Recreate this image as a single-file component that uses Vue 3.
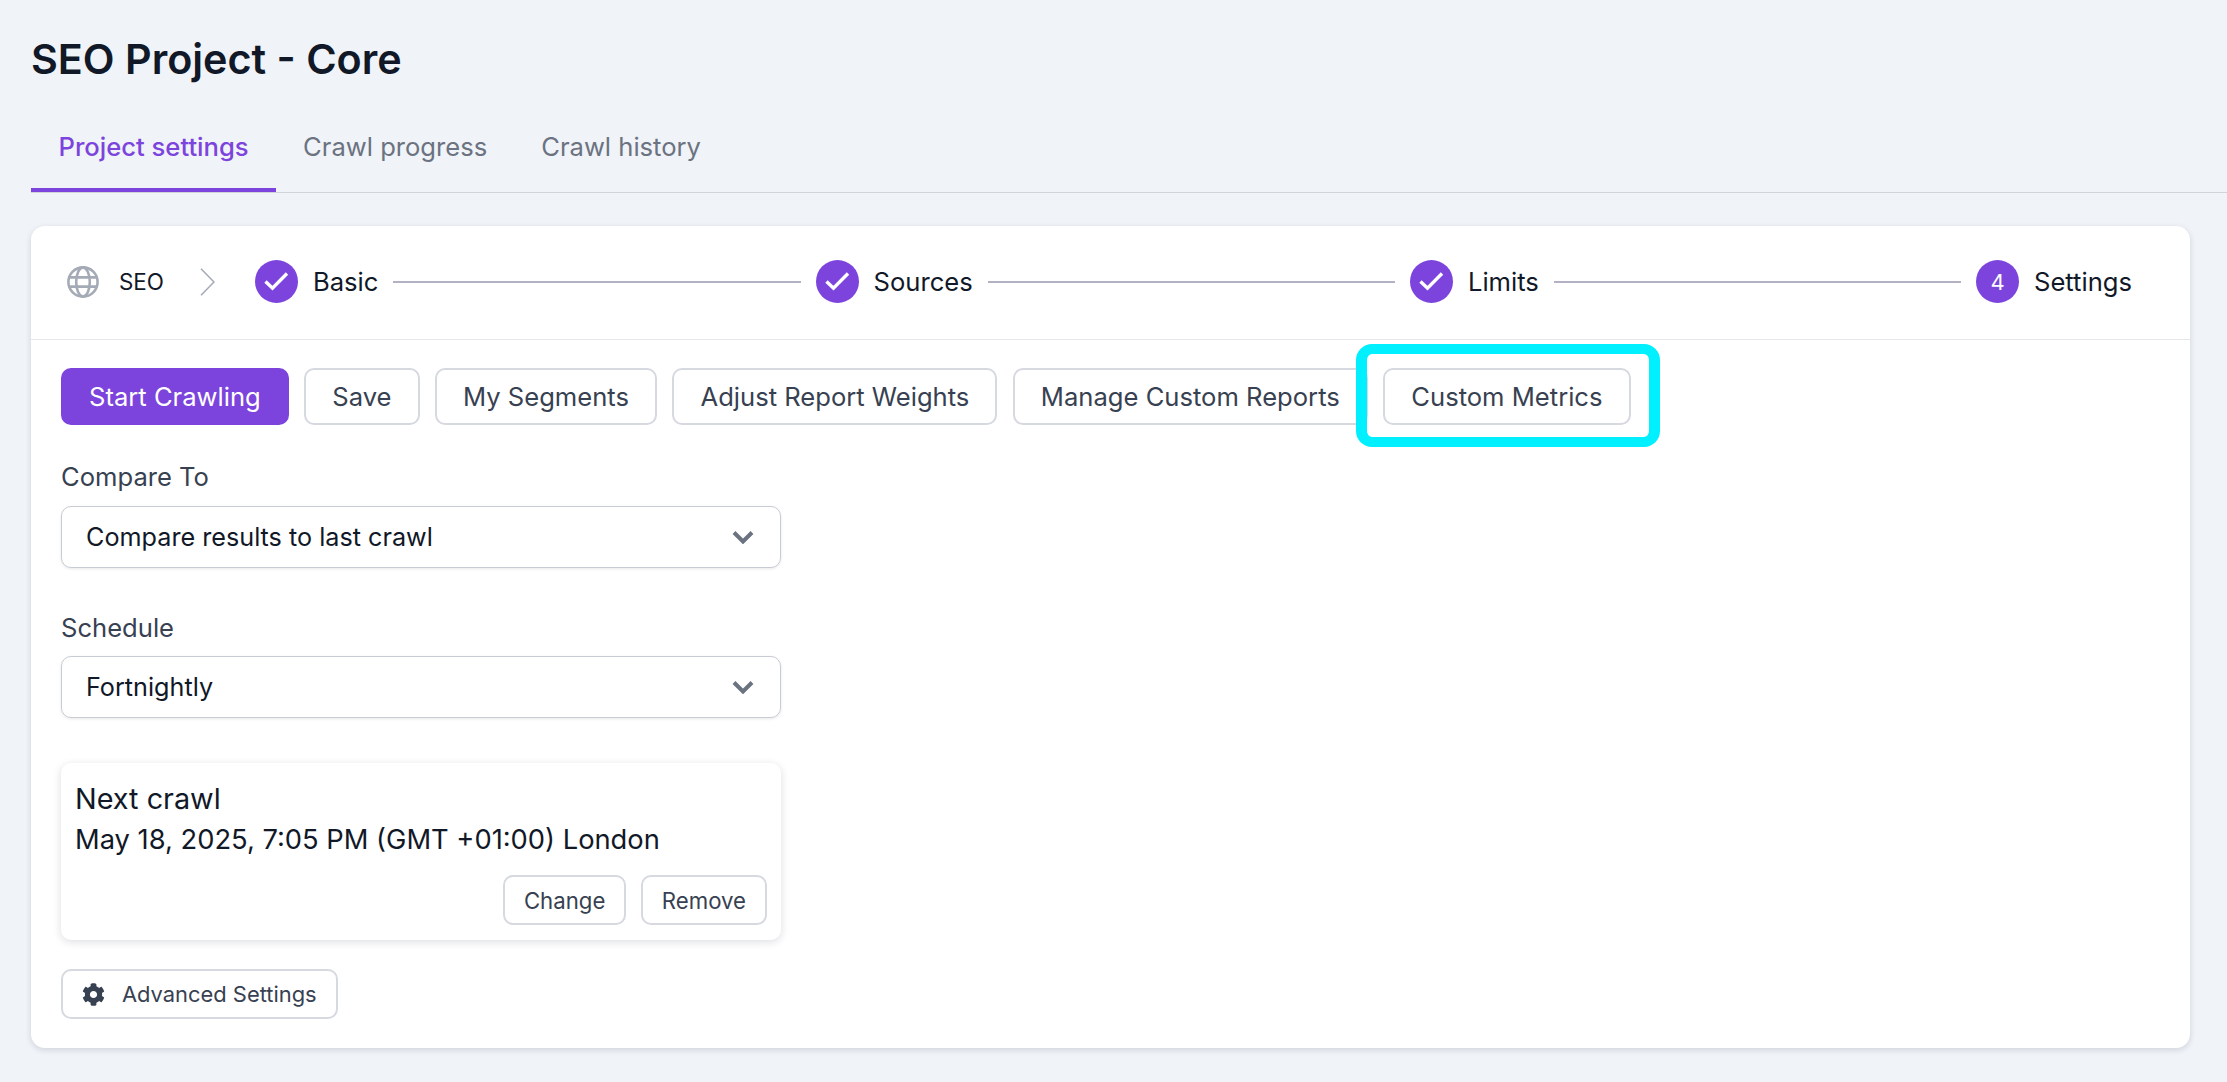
<script setup>
const steps = [
  { label: 'Basic', done: true },
  { label: 'Sources', done: true },
  { label: 'Limits', done: true },
  { label: 'Settings', done: false, num: 4 },
]
const tabs = ['Project settings', 'Crawl progress', 'Crawl history']
const actions = ['Save', 'My Segments', 'Adjust Report Weights', 'Manage Custom Reports']
</script>

<template>
  <div class="page">
    <h1 class="title">SEO Project - Core</h1>
    <nav class="tabs">
      <span v-for="(t, i) in tabs" :key="t" class="tab" :class="{ active: i === 0 }">{{ t }}</span>
    </nav>
    <main class="card">
      <div class="stepper">
        <svg class="globe" viewBox="0 0 32 32" fill="none" stroke="#a5abb6" stroke-width="2.6">
          <circle cx="16" cy="16" r="14.6" />
          <ellipse cx="16" cy="16" rx="6.8" ry="14.6" />
          <path d="M2.6 11.4h26.8M2.6 20.6h26.8" />
        </svg>
        <span class="seo">SEO</span>
        <svg class="chev" viewBox="0 0 15 28" fill="none" stroke="#a5abb6" stroke-width="1.6">
          <path d="M1 .8 14 14 1 27.2" />
        </svg>
        <template v-for="(s, i) in steps" :key="s.label">
          <div class="step">
            <span class="circle">
              <svg v-if="s.done" viewBox="0 0 43 43" class="check" fill="none" stroke="#fff" stroke-width="3.4">
                <path d="M10.5 21.5 17.5 28.2 32 13.5" />
              </svg>
              <template v-else>{{ s.num }}</template>
            </span>
            <span class="step-label">{{ s.label }}</span>
          </div>
          <span v-if="i < steps.length - 1" class="line"></span>
        </template>
      </div>

      <div class="body">
        <div class="actions">
          <button class="btn primary">Start Crawling</button>
          <button v-for="a in actions" :key="a" class="btn">{{ a }}</button>
          <button class="btn highlighted">
            Custom Metrics
            <span class="annotation"></span>
          </button>
        </div>

        <label class="field-label first">Compare To</label>
        <div class="select">
          <span>Compare results to last crawl</span>
          <svg class="caret" viewBox="0 0 22 14" fill="none" stroke="#6b7280" stroke-width="4">
            <path d="M2 2.5 11 11.5 20 2.5" />
          </svg>
        </div>

        <label class="field-label">Schedule</label>
        <div class="select">
          <span>Fortnightly</span>
          <svg class="caret" viewBox="0 0 22 14" fill="none" stroke="#6b7280" stroke-width="4">
            <path d="M2 2.5 11 11.5 20 2.5" />
          </svg>
        </div>

        <section class="next">
          <div class="next-title">Next crawl</div>
          <div class="next-date">May 18, 2025, 7:05 PM (GMT +01:00) London</div>
          <div class="next-actions">
            <button class="btn small">Change</button>
            <button class="btn small">Remove</button>
          </div>
        </section>

        <button class="btn small advanced">
          <svg class="gear" viewBox="0 0 512 512" fill="#374151">
            <path d="M487.4 315.7l-42.6-24.6c4.3-23.2 4.3-47 0-70.2l42.6-24.6c4.9-2.8 7.1-8.6 5.5-14-11.1-35.6-30-67.8-54.7-94.6-3.8-4.1-10-5.1-14.8-2.3L380.8 110c-17.9-15.4-38.5-27.3-60.8-35.1V25.8c0-5.6-3.9-10.5-9.4-11.7-36.7-8.2-74.3-7.8-109.2 0-5.5 1.2-9.4 6.1-9.4 11.7V75c-22.2 7.9-42.8 19.8-60.8 35.1L88.7 85.5c-4.9-2.8-11-1.9-14.8 2.3-24.7 26.7-43.6 58.9-54.7 94.6-1.7 5.4.6 11.2 5.5 14L67.3 221c-4.3 23.2-4.3 47 0 70.2l-42.6 24.6c-4.9 2.8-7.1 8.6-5.5 14 11.1 35.6 30 67.8 54.7 94.6 3.8 4.1 10 5.1 14.8 2.3l42.6-24.6c17.9 15.4 38.5 27.3 60.8 35.1v49.2c0 5.6 3.9 10.5 9.4 11.7 36.7 8.2 74.3 7.8 109.2 0 5.5-1.2 9.4-6.1 9.4-11.7v-49.2c22.2-7.9 42.8-19.8 60.8-35.1l42.6 24.6c4.9 2.8 11 1.9 14.8-2.3 24.7-26.7 43.6-58.9 54.7-94.6 1.5-5.5-.7-11.3-5.6-14.1zM256 336c-44.1 0-80-35.9-80-80s35.9-80 80-80 80 35.9 80 80-35.9 80-80 80z" />
          </svg>
          Advanced Settings
        </button>
      </div>
    </main>
  </div>
</template>

<style>
html, body {
  margin: 0;
  background: #f0f3f8;
}
</style>

<style scoped>
* {
  box-sizing: border-box;
}
.page {
  height: 1082px;
  overflow: hidden;
  padding-left: 31px;
  background: #f0f3f8;
  font-family: Inter, "Liberation Sans", sans-serif;
  color: #111827;
}
.title {
  margin: 0;
  padding-top: 31px;
  height: 108px;
  font-size: 41.3px;
  line-height: 56px;
  font-weight: 600;
  color: #111827;
}
.tabs {
  display: flex;
  height: 85px;
  border-bottom: 1.5px solid #d1d5db;
}
.tab {
  height: 84px;
  padding: 0 27px;
  font-size: 25.6px;
  line-height: 78px;
  font-weight: 400;
  color: #6b7280;
}
.tab.active {
  padding: 0 27.5px;
  color: #7c44dd;
  font-weight: 500;
  border-bottom: 4px solid #7c44dd;
}
.card {
  margin: 33px 37px 0 0;
  height: 822px;
  background: #fff;
  border-radius: 14px;
  box-shadow: 0 2px 6px rgba(17, 24, 39, 0.14);
}
.stepper {
  display: flex;
  align-items: center;
  height: 114px;
  padding: 0 58px 2px 36px;
  border-bottom: 1.5px solid #e5e7eb;
}
.globe {
  width: 32px;
  height: 32px;
  flex: none;
}
.seo {
  margin-left: 20px;
  font-size: 22.4px;
  font-weight: 400;
}
.chev {
  width: 15px;
  height: 28px;
  margin: 0 40px 0 36px;
  flex: none;
}
.step {
  display: flex;
  align-items: center;
  gap: 15px;
  flex: none;
}
.circle {
  width: 43px;
  height: 43px;
  border-radius: 50%;
  background: #7c44dd;
  color: #fff;
  display: flex;
  align-items: center;
  justify-content: center;
  font-size: 22px;
}
.check {
  width: 43px;
  height: 43px;
}
.step-label {
  font-size: 25.6px;
  font-weight: 400;
}
.line {
  flex: 1;
  height: 2px;
  margin: 0 15px;
  background: #b3b1c4;
}
.body {
  padding: 28px 30px 0;
}
.actions {
  display: flex;
  gap: 15.5px;
}
.btn {
  position: relative;
  height: 57px;
  padding: 0 26px;
  font-family: inherit;
  font-size: 25.6px;
  font-weight: 400;
  color: #374151;
  background: #fff;
  border: 2px solid #d6d9e0;
  border-radius: 10px;
  white-space: nowrap;
}
.btn.primary {
  background: #7c44dd;
  border-color: #7c44dd;
  color: #fff;
}
.annotation {
  position: absolute;
  inset: -26px -31px -24px -29px;
  border: solid #00f0ff;
  border-width: 10px 11px;
  border-radius: 16px;
  pointer-events: none;
}
.field-label {
  display: block;
  margin: 43px 0 11px;
  font-size: 25.6px;
  line-height: 34px;
  font-weight: 400;
  color: #374151;
}
.field-label.first {
  margin: 35px 0 12px;
}
.select {
  display: flex;
  align-items: center;
  justify-content: space-between;
  width: 720px;
  height: 62px;
  padding: 0 26px 0 24px;
  font-size: 25.2px;
  color: #111827;
  border: 1px solid #c8ccd4;
  border-radius: 10px;
  box-shadow: 0 1px 3px rgba(17, 24, 39, 0.1);
}
.caret {
  width: 22px;
  height: 14px;
  flex: none;
}
.next {
  width: 720px;
  height: 177px;
  margin-top: 45px;
  padding: 15px 14px;
  border-radius: 10px;
  background: #fff;
  box-shadow: 0 2px 8px rgba(17, 24, 39, 0.14);
}
.next-title {
  font-size: 28.8px;
  line-height: 41px;
}
.next-date {
  font-size: 27.3px;
  line-height: 41px;
  font-weight: 400;
}
.next-actions {
  display: flex;
  justify-content: flex-end;
  gap: 14.5px;
  margin-top: 15px;
}
.btn.small {
  height: 50px;
  padding: 0 19px;
  font-size: 22.2px;
}
.btn.advanced {
  display: flex;
  align-items: center;
  gap: 17px;
  margin-top: 29px;
  padding: 0 19px;
  height: 50px;
  font-size: 21.9px;
}
.gear {
  width: 23px;
  height: 23px;
  flex: none;
}
</style>
